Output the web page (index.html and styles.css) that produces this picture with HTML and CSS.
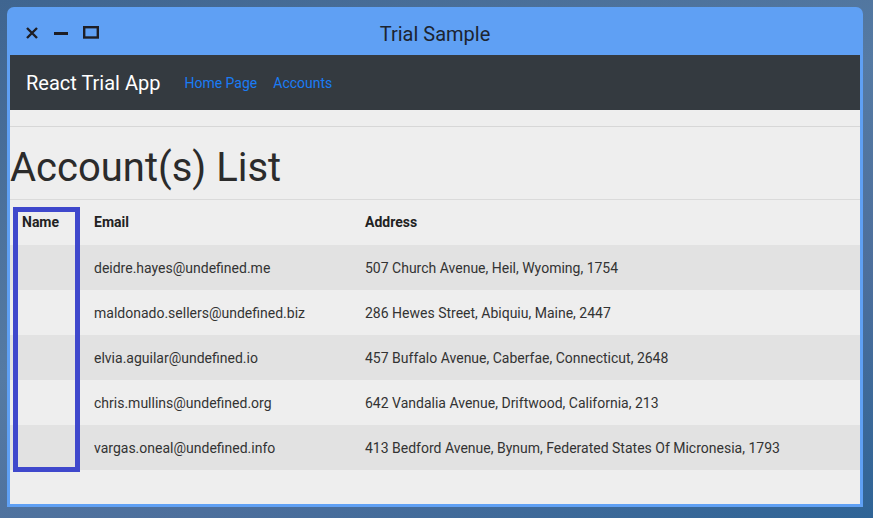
FILE: index.html
```html
<!DOCTYPE html>
<html>
<head>
<meta charset="utf-8">
<link rel="stylesheet" href="styles.css">
</head>
<body>
<div class="window">
  <div class="titlebar">
    <div class="controls">
      <svg class="ctl" width="14" height="14" viewBox="0 0 14 14"><path d="M2 2 L12 12 M12 2 L2 12" stroke="#1e1e24" stroke-width="2.4" fill="none"/></svg>
      <svg class="ctl" width="16" height="14" viewBox="0 0 16 14"><rect x="1" y="6" width="14" height="3" fill="#1e1e24"/></svg>
      <svg class="ctl" width="16" height="14" viewBox="0 0 16 14"><rect x="1.2" y="1.2" width="13.6" height="10.3" stroke="#1e1e24" stroke-width="2.4" fill="none"/></svg>
    </div>
    <div class="title">Trial Sample</div>
  </div>
  <div class="app">
    <nav class="navbar">
      <span class="brand">React Trial App</span>
      <a class="navlink">Home Page</a>
      <a class="navlink">Accounts</a>
    </nav>
    <div class="topline"></div>
    <h1 class="heading">Account(s) List</h1>
    <div class="tablewrap">
      <table class="accounts">
        <thead>
          <tr><th class="c-name">Name</th><th class="c-email">Email</th><th>Address</th></tr>
        </thead>
        <tbody>
          <tr><td></td><td>deidre.hayes@undefined.me</td><td>507 Church Avenue, Heil, Wyoming, 1754</td></tr>
          <tr><td></td><td>maldonado.sellers@undefined.biz</td><td>286 Hewes Street, Abiquiu, Maine, 2447</td></tr>
          <tr><td></td><td>elvia.aguilar@undefined.io</td><td>457 Buffalo Avenue, Caberfae, Connecticut, 2648</td></tr>
          <tr><td></td><td>chris.mullins@undefined.org</td><td>642 Vandalia Avenue, Driftwood, California, 213</td></tr>
          <tr><td></td><td>vargas.oneal@undefined.info</td><td>413 Bedford Avenue, Bynum, Federated States Of Micronesia, 1793</td></tr>
        </tbody>
      </table>
      <div class="highlight"></div>
    </div>
  </div>
</div>
</body>
</html>
```

FILE: styles.css
```css
* { box-sizing: border-box; }
html, body { margin: 0; padding: 0; }
body {
  width: 873px;
  height: 518px;
  overflow: hidden;
  padding: 7px 10px 11px 7px;
  background: linear-gradient(160deg, #3f6590 0%, #557aa3 45%, #4d6f9c 70%, #2f6496 100%);
  font-family: Roboto, "Noto Sans", sans-serif;
}
.window {
  width: 856px;
  height: 500px;
  background: #5fa0f4;
  border-radius: 7px 7px 0 0;
  padding: 0 3px 3px 3px;
  display: flex;
  flex-direction: column;
}
.titlebar {
  height: 48px;
  flex: none;
  display: flex;
  align-items: center;
  position: relative;
}
.controls {
  display: flex;
  align-items: center;
  gap: 14px;
  padding-left: 15px;
  padding-top: 3px;
}
.ctl { display: block; }
.title {
  position: absolute;
  left: 0;
  right: 0;
  top: 0;
  height: 48px;
  line-height: 55px;
  text-align: center;
  font-size: 20px;
  color: #1c2430;
}
.app {
  flex: 1;
  background: #eeeeee;
  overflow: hidden;
  display: flex;
  flex-direction: column;
}
.navbar {
  height: 55px;
  flex: none;
  background: #343a40;
  display: flex;
  align-items: center;
  padding: 0 16px;
}
.brand {
  font-size: 20px;
  color: #ffffff;
  margin-right: 16px;
}
.navlink {
  font-size: 14px;
  color: #1a7cf5;
  padding: 0 8px;
}
.topline {
  height: 17px;
  flex: none;
  border-bottom: 1px solid #d7d7d7;
}
.heading {
  margin: 17px 0 7px 0;
  font-size: 40px;
  font-weight: 400;
  line-height: 48px;
  color: #2b2b2b;
}
.tablewrap {
  position: relative;
}
.accounts {
  width: 100%;
  border-collapse: collapse;
  font-size: 14px;
  line-height: 21px;
  color: #333333;
}
.accounts th {
  text-align: left;
  font-weight: 700;
  color: #222222;
  padding: 12px;
  border-top: 1px solid #dadada;
}
.accounts td {
  padding: 13px 12px 11px 12px;
}
.c-name { width: 72px; }
.c-email { width: 271px; }
.accounts tbody tr:nth-child(odd) { background: #e2e2e2; }
.highlight {
  position: absolute;
  left: 3px;
  top: 8px;
  width: 67px;
  height: 265px;
  border: 5px solid #3f48cc;
}
```
